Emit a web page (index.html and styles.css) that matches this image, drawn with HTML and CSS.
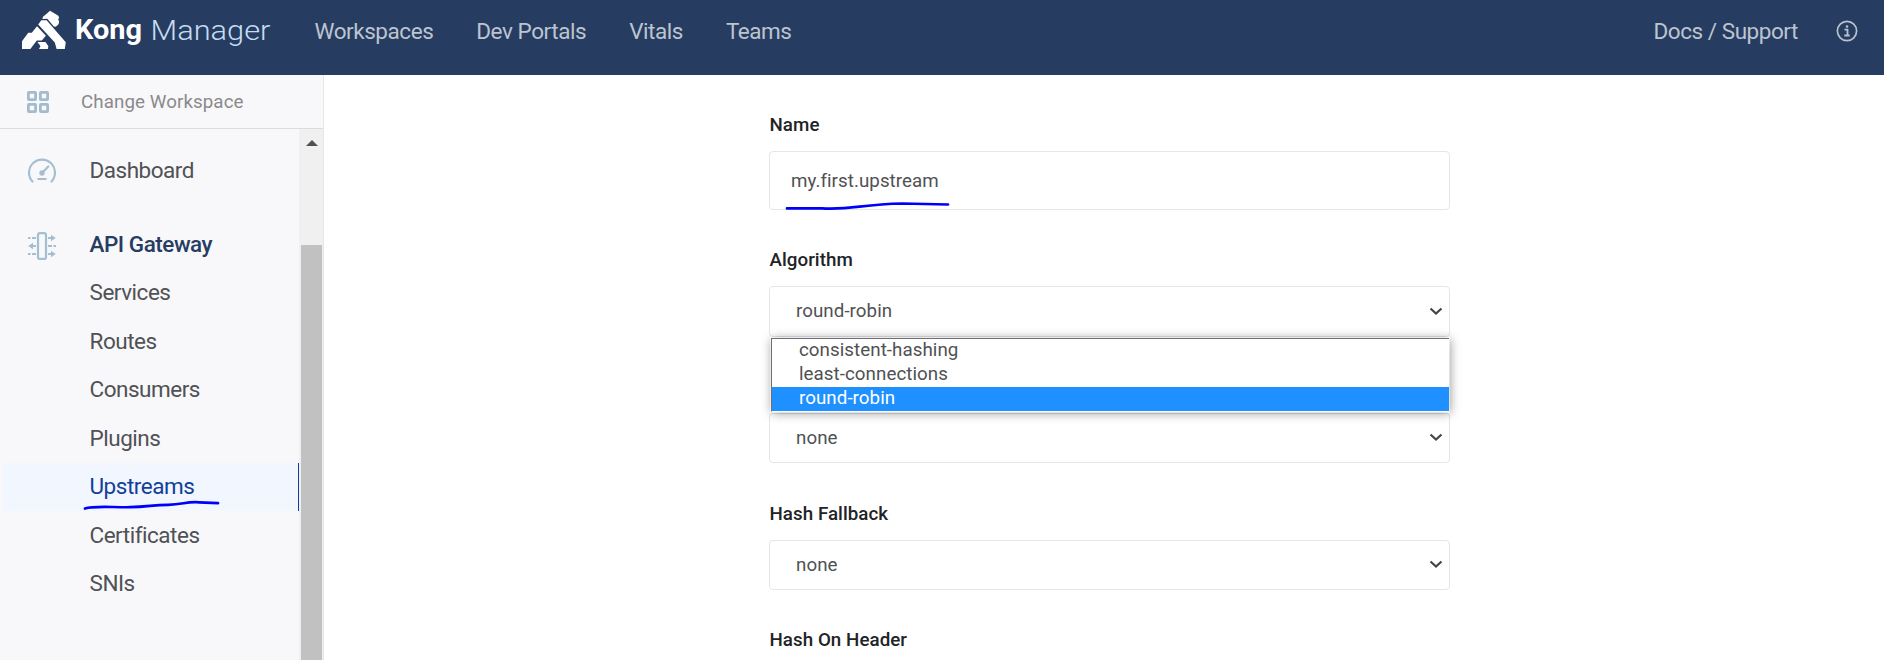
FILE: index.html
```html
<!DOCTYPE html>
<html lang="en">
<head>
<meta charset="utf-8">
<title>Kong Manager</title>
<link rel="stylesheet" href="styles.css">
</head>
<body>
<header class="topbar">
  <svg class="brand" width="260" height="50" viewBox="0 0 260 50" aria-label="Kong Manager">
    <g fill="#fff">
      <path d="M27.500 4.800 32 .8 40 5.600 41.200 7.600 40.200 9.300 41.200 11.800 40.500 14.200 37.800 16.800 35.800 16.600 29.300 8.800 24.300 9 25.200 6.600Z"/>
      <path d="M23.300 10.300 28.600 10.200 47.800 32.200 46.800 39H38.600L36.800 32.400 20.200 14.600Z"/>
      <path d="M19 16.200 27.900 25.700 23.800 30.400H18.800L12.400 39H4V31.300L10.200 22.800H13.800Z"/>
      <path d="M19.400 32H27.500L30.400 36.200 29.800 39H21L22.500 36Z"/>
    </g>
    <text class="brand-bold" x="57" y="29" textLength="67" lengthAdjust="spacingAndGlyphs">Kong</text>
    <text class="brand-light" x="132.500" y="30" textLength="120" lengthAdjust="spacingAndGlyphs">Manager</text>
  </svg>
  <nav class="nav"><a>Workspaces</a><a>Dev Portals</a><a>Vitals</a><a>Teams</a></nav>
  <a class="docs">Docs / Support</a>
  <svg class="info" width="22" height="22" viewBox="0 0 22 22" fill="none" stroke="#b8c1cd">
    <circle cx="11" cy="11" r="9.600" stroke-width="1.700"/>
    <path d="M8.500 9.600H11.500V15.500M8.300 15.500H13.700" stroke-width="1.800"/>
    <circle cx="11" cy="6.500" r="1.300" fill="#b8c1cd" stroke="none"/>
  </svg>
</header>
<div class="body">
  <aside class="sidebar">
    <div class="workspace">
      <svg width="22" height="22" viewBox="0 0 22 22" fill="none" stroke="#a3bccd" stroke-width="2.800">
        <rect x="1.400" y="1.400" width="7.200" height="7.200" rx=".5"/><rect x="13.400" y="1.400" width="7.200" height="7.200" rx=".5"/>
        <rect x="1.400" y="13.400" width="7.200" height="7.200" rx=".5"/><rect x="13.400" y="13.400" width="7.200" height="7.200" rx=".5"/>
      </svg>
      <span>Change Workspace</span>
    </div>
    <div class="scroller">
      <div class="menu">
        <a class="item dashboard">
          <svg width="28" height="28" viewBox="0 0 28 28" fill="none" stroke="#a3bfd0" stroke-width="2.200" stroke-linecap="round">
            <path d="M4.500 23.500A13 13 0 1 1 23.500 23.500"/>
            <path d="M14 15 20.300 8.500M10.300 21H17.700"/><circle cx="14" cy="15" r="1.600" fill="#a3bfd0"/>
          </svg>Dashboard</a>
        <a class="item group">
          <svg width="28" height="28" viewBox="0 0 28 28" fill="none" stroke="#a3bfd0" stroke-width="2.200">
            <rect x="10" y="1.100" width="8" height="25.800" rx="2"/>
            <path d="M0 6H2.500M4 6H8M20 6H24M4 14H8M20 14H24M25.500 14H28M0 22H2.500M4 22H8M20 22H24"/>
            <path d="M23 2.800 27.800 6 23 9.200ZM5 10.800.2 14 5 17.200ZM23 18.800 27.800 22 23 25.200Z" fill="#a3bfd0" stroke="none"/>
          </svg>API Gateway</a>
        <a class="item">Services</a>
        <a class="item">Routes</a>
        <a class="item">Consumers</a>
        <a class="item">Plugins</a>
        <a class="item active">Upstreams
          <svg class="ink ink-menu" width="140" height="12" viewBox="0 0 140 12"><path d="M3 8.500C12 5.500 30 7.500 48 7.200S70 5 86 4.800 103 1.500 117 2.300L136 3.200"/></svg>
        </a>
        <a class="item">Certificates</a>
        <a class="item">SNIs</a>
      </div>
      <div class="scrollbar">
        <svg width="12" height="6" viewBox="0 0 12 6"><path d="M0 6 6 0 12 6Z" fill="#505050"/></svg>
        <div class="thumb"></div>
      </div>
    </div>
  </aside>
  <main class="form">
    <div class="field">
      <label>Name</label>
      <div class="control input">my.first.upstream
        <svg class="ink ink-name" width="168" height="12" viewBox="0 0 168 12"><path d="M3 7.400H38C68 9 76 3.500 118 2.500L164 3.500"/></svg>
      </div>
    </div>
    <div class="field">
      <label>Algorithm</label>
      <div class="control select">round-robin
        <svg class="chev" width="14" height="9" viewBox="0 0 14 9"><path d="M1.500 1.500 7 6.500 12.500 1.500"/></svg>
        <div class="options">
          <div>consistent-hashing</div><div>least-connections</div><div class="chosen">round-robin</div>
        </div>
      </div>
    </div>
    <div class="field covered">
      <div class="control select">none
        <svg class="chev" width="14" height="9" viewBox="0 0 14 9"><path d="M1.500 1.500 7 6.500 12.500 1.500"/></svg>
      </div>
    </div>
    <div class="field">
      <label>Hash Fallback</label>
      <div class="control select">none
        <svg class="chev" width="14" height="9" viewBox="0 0 14 9"><path d="M1.500 1.500 7 6.500 12.500 1.500"/></svg>
      </div>
    </div>
    <div class="field last"><label>Hash On Header</label></div>
  </main>
</div>
</body>
</html>
```
FILE: styles.css
```css
* { box-sizing: border-box; }
body {
  margin: 0;
  height: 660px;
  overflow: hidden;
  display: flex;
  flex-direction: column;
  background: #fff;
  font-family: Roboto, "Liberation Sans", sans-serif;
}
svg { display: block; flex: none; }

.topbar {
  flex: none;
  height: 75px;
  padding: 0 26px 13px 18px;
  display: flex;
  align-items: center;
  background: #273c61;
  color: #bcc5cf;
  font-size: 22.5px;
  letter-spacing: -.45px;
}
.brand { margin-top: 8px; letter-spacing: 0; }
.brand-bold { font-size: 27px; font-weight: 700; fill: #fff; }
.brand-light { font-size: 28px; font-weight: 300; fill: #c5dcf2; }
.nav { display: flex; gap: 43px; margin-left: 36.5px; }
.docs { margin-left: auto; }
.info { margin-left: 38px; }

.body { flex: 1; min-height: 0; display: flex; }

.sidebar {
  width: 324px;
  flex: none;
  display: flex;
  flex-direction: column;
  background: #f8f8fb;
  border-right: 1px solid #e6e6ea;
}
.workspace {
  height: 54px;
  flex: none;
  padding-left: 27px;
  display: flex;
  align-items: center;
  gap: 32px;
  border-bottom: 1px solid #dcdcdf;
  color: #8a8a8a;
  font-size: 18.75px;
  letter-spacing: .08px;
}
.scroller { flex: 1; min-height: 0; display: flex; }
.menu { flex: 1; padding: 17.5px 0 0 3px; }
.item {
  position: relative;
  height: 48.5px;
  padding: 0 0 1px 86.5px;
  display: flex;
  align-items: center;
  color: #505154;
  font-size: 22.5px;
  letter-spacing: -.48px;
}
.dashboard, .group { padding-left: 25px; gap: 33.5px; }
.dashboard { margin-bottom: 25px; }
.group { color: #273c61; font-weight: 500; }
.group svg { margin-top: 5px; }
.dashboard svg { margin-top: 4px; }
.active { background: #f1f6ff; color: #11409b; border-right: 1px solid #11409b; }

.scrollbar {
  width: 24px;
  flex: none;
  padding: 11px 1px 0 2px;
  display: flex;
  flex-direction: column;
  align-items: center;
  background: #f0f0f0;
}
.thumb { width: 100%; flex: 1; margin-top: 99px; background: #c1c1c1; }

.form { width: 681px; margin: 38px 0 0 445px; letter-spacing: .05px; }
.field { height: 127px; }
.field:first-child { height: 135px; }
.field label {
  display: block;
  height: 24px;
  line-height: 24px;
  margin-bottom: 14px;
  padding-left: .5px;
  color: #212327;
  font-size: 18.75px;
  font-weight: 500;
}
.field.covered { height: 126.5px; padding-top: 37.5px; }
.field.last { height: 24px; margin-top: -.5px; }
.control {
  position: relative;
  display: flex;
  align-items: center;
  border: 1px solid #e4e6ea;
  border-radius: 4px;
  color: #505154;
  font-size: 18.75px;
}
.input { height: 59px; padding-left: 21px; }
.select { height: 50.5px; padding: 0 6px 0 26px; justify-content: space-between; }
.chev path { fill: none; stroke: #454545; stroke-width: 2.2; }

.options {
  position: absolute;
  z-index: 2;
  top: 51px;
  left: 1px;
  width: 678px;
  height: 74px;
  background: #fff;
  border: 1px solid #6f6f73;
  border-right: 0;
  border-bottom-color: #fff;
  box-shadow: 0 0 0 1px #ffffff80, 1px 1px 10px #0000006b;
  line-height: 23px;
}
.options div { height: 24px; padding-left: 27px; }
.options .chosen { background: #1e90ff; color: #fff; }

.ink { position: absolute; z-index: 1; }
.ink path { fill: none; stroke: #0000fa; stroke-width: 2.7; stroke-linecap: round; }
.ink-menu { left: 79px; top: 37.5px; }
.ink-name { left: 14px; top: 48.5px; }
```
